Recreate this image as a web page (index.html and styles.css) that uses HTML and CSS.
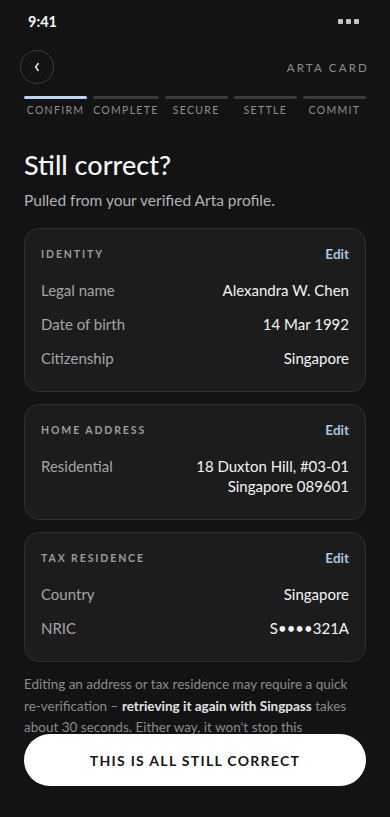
FILE: index.html
```html
<!DOCTYPE html>
<html lang="en">
<head>
    <meta charset="UTF-8">
    <meta name="viewport" content="width=device-width, initial-scale=1.0">
    <title>Arta Card - Confirm</title>
    <link rel="stylesheet" href="styles.css">
</head>
<body>
    <div class="status">
        <span class="time">9:41</span>
        <span class="dots"><i></i><i></i><i></i></span>
    </div>

    <div class="topbar">
        <button class="back" aria-label="Back">
            <svg width="8" height="10" viewBox="0 0 8 10"><path d="M5.2 1.5 L2.6 5 L5.2 8.5" fill="none" stroke="#e6e6e6" stroke-width="1.5" stroke-linecap="round" stroke-linejoin="round"/></svg>
        </button>
        <span class="product">ARTA CARD</span>
    </div>

    <div class="steps">
        <div class="step active"><div class="bar"></div><span>CONFIRM</span></div>
        <div class="step"><div class="bar"></div><span>COMPLETE</span></div>
        <div class="step"><div class="bar"></div><span>SECURE</span></div>
        <div class="step"><div class="bar"></div><span>SETTLE</span></div>
        <div class="step"><div class="bar"></div><span>COMMIT</span></div>
    </div>

    <main class="content">
        <h1>Still correct?</h1>
        <p class="sub">Pulled from your verified Arta profile.</p>

        <section class="card">
            <div class="card-head">
                <span class="card-title">IDENTITY</span>
                <a class="edit" href="#">Edit</a>
            </div>
            <div class="row"><span class="label">Legal name</span><span class="value">Alexandra W. Chen</span></div>
            <div class="row"><span class="label">Date of birth</span><span class="value">14 Mar 1992</span></div>
            <div class="row"><span class="label">Citizenship</span><span class="value">Singapore</span></div>
        </section>

        <section class="card">
            <div class="card-head">
                <span class="card-title">HOME ADDRESS</span>
                <a class="edit" href="#">Edit</a>
            </div>
            <div class="row"><span class="label">Residential</span><span class="value">18 Duxton Hill, #03-01<br>Singapore 089601</span></div>
        </section>

        <section class="card">
            <div class="card-head">
                <span class="card-title">TAX RESIDENCE</span>
                <a class="edit" href="#">Edit</a>
            </div>
            <div class="row"><span class="label">Country</span><span class="value">Singapore</span></div>
            <div class="row"><span class="label">NRIC</span><span class="value">S&bull;&bull;&bull;&bull;321A</span></div>
        </section>

        <p class="note">Editing an address or tax residence may require a quick re-verification &ndash; <b>retrieving it again with Singpass</b> takes about 30 seconds. Either way, it won't stop this</p>
    </main>

    <div class="footer">
        <button class="confirm">THIS IS ALL STILL CORRECT</button>
    </div>
</body>
</html>
```

FILE: styles.css
```css
*{
    box-sizing: border-box;
}
body{
    margin: 0;
    background: #131314;
    color: #f2f2f2;
    font-family: "Lato", "Noto Sans", sans-serif;
    height: 817px;
    overflow: hidden;
    display: flex;
    flex-direction: column;
}
.status{
    height: 42px;
    flex: none;
    padding: 0 31px 0 28px;
    display: flex;
    align-items: center;
    justify-content: space-between;
}
.time{
    font-size: 14.5px;
    font-weight: 700;
    color: #f4f4f4;
}
.dots{
    display: flex;
    gap: 3px;
}
.dots i{
    width: 5px;
    height: 5px;
    background: #c4c4c4;
    border-radius: 1px;
}
.topbar{
    flex: none;
    margin-top: 8px;
    padding: 0 21px 0 20px;
    display: flex;
    align-items: center;
    justify-content: space-between;
}
.back{
    width: 34px;
    height: 34px;
    border-radius: 50%;
    border: 1px solid #3c3c3e;
    background: none;
    padding: 0;
    display: flex;
    align-items: center;
    justify-content: center;
}
.product{
    font-size: 11.5px;
    letter-spacing: 2.2px;
    color: #8c8c8e;
}
.steps{
    flex: none;
    margin-top: 12px;
    padding: 0 24px;
    display: grid;
    grid-template-columns: repeat(5, 1fr);
    gap: 6px;
}
.step{
    display: flex;
    flex-direction: column;
    align-items: center;
}
.step .bar{
    width: 100%;
    height: 3px;
    border-radius: 2px;
    background: #3a3a3c;
}
.step.active .bar{
    background: #b9d5f2;
}
.step span{
    margin-top: 5px;
    font-size: 10.5px;
    line-height: 13px;
    letter-spacing: 1.3px;
    color: #8e8e90;
    white-space: nowrap;
}
.content{
    flex: 1;
    min-height: 0;
    overflow: hidden;
    padding: 0 24px;
}
h1{
    margin: 32px 0 0;
    font-size: 27px;
    line-height: 32px;
    font-weight: 500;
    color: #f6f6f6;
}
.sub{
    margin: 9px 0 18px;
    font-size: 15.5px;
    line-height: 20px;
    color: #b2b2b4;
}
.card{
    background: #1c1c1d;
    border: 1px solid #303032;
    border-radius: 15px;
    padding: 17px 16px 23px;
    margin-bottom: 12px;
}
.card-head{
    display: flex;
    justify-content: space-between;
    align-items: center;
    height: 16px;
    margin-bottom: 18px;
}
.card-title{
    font-size: 10.5px;
    font-weight: 700;
    letter-spacing: 1.9px;
    color: #9c9c9e;
}
.edit{
    font-size: 13.5px;
    font-weight: 700;
    color: #a9c6e3;
    text-decoration: none;
}
.row{
    display: flex;
    justify-content: space-between;
    font-size: 15px;
    line-height: 20px;
}
.row + .row{
    margin-top: 14px;
}
.label{
    color: #a4a4a6;
}
.value{
    color: #f4f4f4;
    text-align: right;
}
.note{
    margin: 10px 0 0;
    font-size: 13.5px;
    line-height: 21.5px;
    color: #8a8a8c;
}
.note b{
    color: #e2e2e4;
    font-weight: 700;
}
.footer{
    flex: none;
    padding: 0 24px 31px;
}
.confirm{
    width: 100%;
    height: 52px;
    border: none;
    border-radius: 26px;
    background: #ffffff;
    color: #161618;
    font-family: inherit;
    font-size: 14px;
    font-weight: 700;
    letter-spacing: 1.3px;
}
```
